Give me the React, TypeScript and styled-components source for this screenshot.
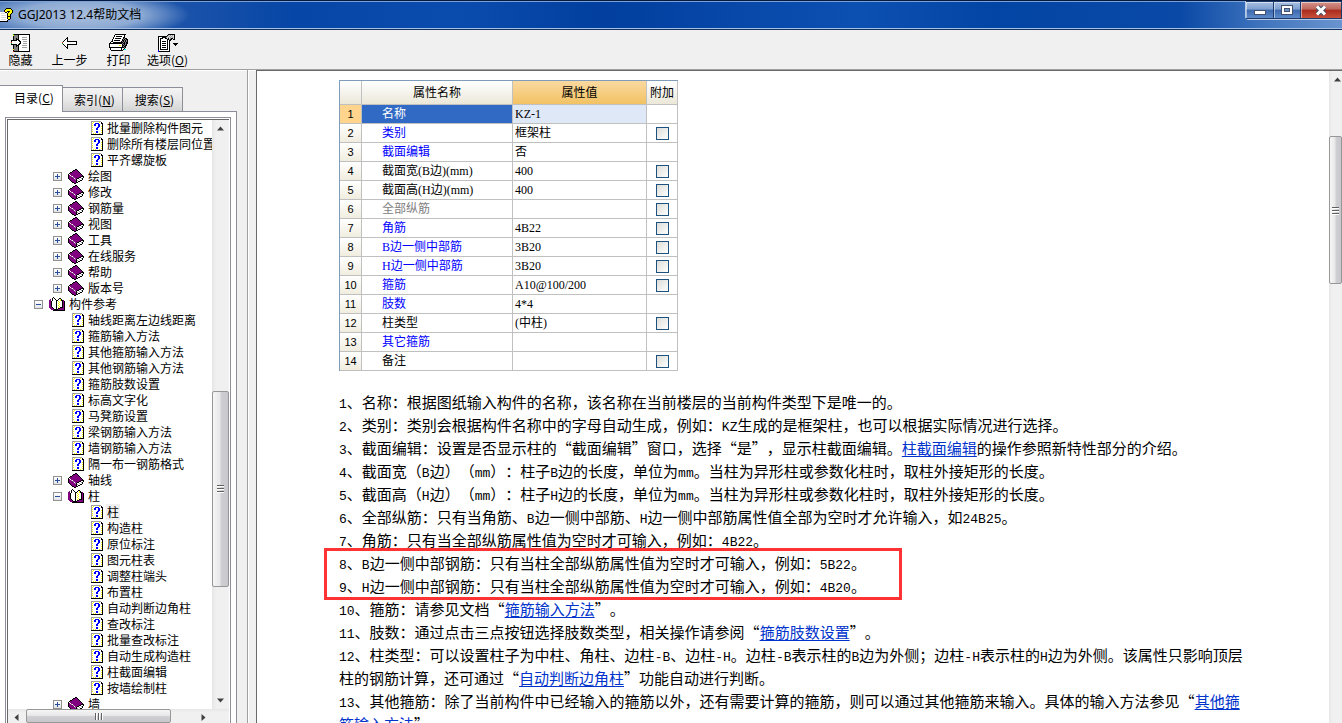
import React from "react";
import styled, { createGlobalStyle, css } from "styled-components";

const cjk = `"Noto Sans CJK SC", sans-serif`;

const GlobalStyle = createGlobalStyle`
  *, *::before, *::after { box-sizing: border-box; }
  body { margin: 0; font-family: ${cjk}; font-size: 12px; color: #000; text-spacing-trim: space-all; }
  button { font: inherit; color: inherit; padding: 0; border: 0; background: none; }
`;

/* ---------- pixel icons ---------- */

const palette: Record<string, string> = {
  K: "#000000",
  W: "#ffffff",
  P: "#800080",
  Y: "#ffff00",
  B: "#0000ff",
  G: "#a0a0a0",
  D: "#808080",
  L: "#d8d8d8",
  C: "#00ffff",
  R: "#e02020",
  N: "#00a000",
};

const PixelIcon = ({ rows }: { rows: string[] }) => {
  const width = Math.max(...rows.map((r) => r.length));
  const runs: React.ReactNode[] = [];
  rows.forEach((row, y) => {
    let x = 0;
    while (x < row.length) {
      const c = row[x];
      let end = x;
      while (row[end] === c) end++;
      if (palette[c]) {
        runs.push(<rect key={`${x}-${y}`} x={x} y={y} width={end - x} height={1} fill={palette[c]} />);
      }
      x = end;
    }
  });
  return (
    <svg width={width} height={rows.length} viewBox={`0 0 ${width} ${rows.length}`} shapeRendering="crispEdges" aria-hidden="true">
      {runs}
    </svg>
  );
};

const closedBook = [
  ".......KK.......",
  ".....KKPPK......",
  "....KPPPPPK.....",
  "..KKPPPPPPPK....",
  ".KPPPPPPPPPPK...",
  "KWPPPPPPPPPPPK..",
  "KPWPPPPPPPPPPPK.",
  "KPPGWPPPPPPPPKKK",
  "KPPPPGPPPPPKKWWK",
  "KPPPPPWPPKKWWGK.",
  ".KPPPPPGKWWGWWK.",
  "..KPPPPPKGWWKK..",
  "...KPPPPKWKK....",
  "....KKPPKK......",
  "......KK........",
];

const openBook = [
  "....K...........",
  "...KWK....KK....",
  ".P.KWWK..KWYK...",
  "PP.KWWWKKWWYKKP.",
  "PPKWWWWKWYWWWKPK",
  "PPKWWWWKWWYWWKPK",
  "PPKWWWWKWYWWWKPK",
  "PPKWWWWKWWYWWKPK",
  "PPKWWWWKWYWWWKPK",
  "PPKWWWWKWWYWWKPK",
  "PPPKWWWKWYWKKKPK",
  ".PPPKWWKWKKPPPPK",
  "..PPPKKKKPPPPPPK",
  "....KKKKKKKKKKKK",
];

const helpPage = [
  "GGGGGGGGGG..",
  "GWYWWWWWYWK.",
  "GYWWBBBBWWKK",
  "GWWBBWWBBWWK",
  "GYWBBWWBBWWK",
  "GWWWWWWBBWYK",
  "GYWWWWBBWWWK",
  "GWWWWBBWWWYK",
  "GYWWWBBWWWWK",
  "GWWWWWWWWWYK",
  "GYWWWBBWWWWK",
  "GWWWWBBWWWYK",
  "GWYWYWWWYWWK",
  "KKKKKKKKKKKK",
];

const hidePane = [
  "..NKKKKKKKKKKKKKKKK",
  "..YDDDDKWWWWWWWWWWK",
  "..KDDDDKWWWWWWWWWWK",
  "..KDDDDKWWWGGGGGWWK",
  "..KDDKDKWWWWWWWWWWK",
  "..KDDKKKWWWGGGGGWWK",
  "KKKKKKWKKWWWWWWWWWK",
  "KWWWWWWWKKWWGGGGWWK",
  "RWWWWWWWWKWWWWWWWWK",
  "NWWWWWWWKKWWGGGGWWK",
  "KKKKKKWKKWWWWWWWWWK",
  "..KDDKKKWWWGGGGGWWK",
  "..KDDKDKWWWWWWWWWWK",
  "..KDDDDKWWWGGGGGWWK",
  "..KDDDDKWWWWWWWWWWK",
  "..YDDDDKWWWWWWWWWWK",
  "..KDDDDKWWWWWWWWWWK",
  "..RKKKKKKKKKKKKKKKK",
];

const backArrow = [
  ".....K..........",
  "....KK..........",
  "...KWK..........",
  "..KWWK..........",
  ".KWWWKKKKKKKKKK.",
  "RWWWWWWWWWWWWWK.",
  "NWWWWWWWWWWWWWK.",
  ".KWWWKKKKKKKKKK.",
  "..KWWK..........",
  "...KWK..........",
  "....KK..........",
  ".....K..........",
];

const printer = [
  "......KKKKKKKKKKK...",
  ".....KWWWWWWWWWK....",
  ".....KWKKKKKKWWK....",
  "....KWWWWWWWWWKK....",
  "....KWKKKKKKWWKDKK..",
  "...KWWWWWWWWWKDKDKK.",
  "...KWKKKKKKWWKKDKDK.",
  "..KKWWWWWWWWKDKDKDK.",
  ".KWWKKKKKKKKKKDKDKK.",
  "KKKKKKKKKKKKKDKKDKK.",
  "KWWWWWWWWWWWWKDKDK..",
  "KWWWWWWWWWYYWKKDKK..",
  "KWWWWWWWWWWWWKDKK...",
  "KKKKKKKKKKKKKKKDK...",
  ".KWWWWWWWWWWKWWK....",
  ".KWWWWWWWWWWKWKCC...",
  "..KKKKKKKKKKKK......",
];

const options = [
  "..........KKKKKKK...",
  ".........KGLGLGLK...",
  "KKKKKKKKKGLGLGLLK...",
  "KWWWKKKKGLGLGLGLK...",
  "KWKKKWWKKLKLGKKLK...",
  "KWKWWWWWWKKGKK.KK...",
  "KWKWWWWWWKWKK.......",
  "KWKWKKKKWKWK........",
  "KWKWWWWWWKWK........",
  "KWKWKKKKWKWK...KKKKK",
  "KWKWWWWWWKWK....KKK.",
  "KWKWKKKKWKWK.....K..",
  "KWKWWWWWWKWK........",
  "KWKWKKKKWKWK........",
  "KWKWWWWWWKWK........",
  "KWKKKKKKKKWK........",
  "BWWWWWWWWWWK........",
  "BKKKKKKKKKKK........",
];

const appMark = [
  "......KKKKK..",
  ".....KYYYYYK.",
  "....KYYYYYYYK",
  "....KYYKKKYYK",
  "WWWWWKKWKYYYK",
  "WLLLLWWKYYYK.",
  "WWWWWWWKYYK..",
  "WLLLLLWKYYK..",
  "WWWWWWWKKKK..",
  "WLLLLLWKYYK..",
  "WWWWWWWKYYK..",
  "WLLLLLWWKK...",
  "WWWWWWWK.....",
  "KKKKKKKK.....",
];

/* ---------- window frame ---------- */

const Frame = styled.div`
  display: flex;
  flex-direction: column;
  height: 100vh;
  overflow: hidden;
  background: #f0f0f0;
`;

const TitleBar = styled.header`
  display: flex;
  flex: none;
  align-items: flex-start;
  height: 30px;
  border-top: 1px solid #06193f;
  border-bottom: 1px solid #12315f;
  box-shadow: inset 0 1px 0 #7ba2d6, inset 0 -1px 0 #a4c0e4;
  background: radial-gradient(ellipse 110px 24px at 80px 14px, #a9bedc 0, #8eabd4 55%, transparent 100%),
    linear-gradient(90deg, #3f6fb6 0, #1a52aa 14%, #0646a6 22%, #0a4cae 34%, #023f9e 45%, #0c50b2 64%, #0345a4 74%, #0a49a6 88%, #3f74bd 94%, #6a94cf 100%);
`;

const AppTitle = styled.h1`
  display: flex;
  flex: 1;
  align-items: center;
  gap: 5px;
  height: 28px;
  margin: 0;
  font: 400 12px/16px "Noto Sans", ${cjk};
`;

const Captions = styled.div`
  display: flex;
  border: 1px solid #b7cbe6;
  border-width: 0 0 1px 1px;
  border-radius: 0 0 0 4px;
`;

const Caption = styled.button<{ $width: number; $close?: boolean; $low?: boolean }>`
  display: grid;
  place-items: center;
  width: ${(p) => p.$width}px;
  height: 18px;
  padding-top: ${(p) => (p.$low ? 5 : 0)}px;
  border: 1px solid #1d3a6c;
  border-left-width: 0;
  box-shadow: inset 1px 1px 0 rgba(255, 255, 255, 0.5);
  background: ${(p) =>
    p.$close
      ? "linear-gradient(#d5948c 0, #c0675c 45%, #a92b1c 50%, #c8503a 100%)"
      : "linear-gradient(#a9c0e2 0, #7d9fd0 45%, #3c69ae 50%, #5c8acb 100%)"};
`;

const ToolBar = styled.div`
  display: flex;
  flex: none;
  height: 40px;
  margin-left: -4px;
  border-bottom: 1px solid #a0a0a0;
`;

const Tool = styled.button`
  display: flex;
  flex-direction: column;
  align-items: center;
  justify-content: space-between;
  width: 49px;
  padding: 3px 0 1px;
  white-space: nowrap;
  line-height: 16px;
`;

const ToolArt = styled.span`
  display: grid;
  place-items: center;
  height: 20px;
`;

const Body = styled.div`
  display: grid;
  flex: 1;
  grid-template-columns: 247px 10px minmax(0, 1fr);
  min-height: 0;
`;

/* ---------- sidebar ---------- */

const Sidebar = styled.aside`
  display: flex;
  flex-direction: column;
  min-height: 0;
  padding: 14px 10px 0 0;
  border-top: 1px solid #fff;
`;

const TabList = styled.div`
  display: flex;
  flex: none;
  align-items: flex-end;
  height: 26px;
`;

const Tab = styled.button<{ $active?: boolean }>`
  height: 24px;
  border: 1px solid #8c8e99;
  border-left: 0;
  border-bottom: 0;
  line-height: 22px;
  text-align: center;
  background: linear-gradient(#f4f4f4, #e8e8e8 50%, #d4d4d4);
  ${(p) =>
    p.$active
      ? css`
          position: relative;
          width: 63px;
          height: 27px;
          margin-bottom: -1px;
          padding: 0 0 3px 6px;
          background: #fff;
        `
      : css`
          width: 60px;
          padding-left: 4px;
        `}
`;

const TabPanel = styled.div`
  display: flex;
  flex: 1;
  min-height: 0;
  padding: 5px 5px 0;
  border: 1px solid #8c8e99;
  border-width: 1px 1px 0 0;
  background: #fff;
`;

const TreeFrame = styled.div`
  display: flex;
  flex: 1;
  min-width: 0;
  padding: 1px 1px 0;
  border: 1px solid #8c8e99;
  border-bottom: 0;
`;

const TreeBox = styled.div`
  display: grid;
  flex: 1;
  grid-template: minmax(0, 1fr) 14px / minmax(0, 1fr) 17px;
  min-width: 0;
  border: 1px solid #696969;
  border-width: 1px 0 0 1px;
`;

const Tree = styled.ul`
  margin: 0;
  padding: 0;
  overflow: hidden;
  list-style: none;
`;

const TreeItem = styled.li<{ $depth: number }>`
  display: flex;
  align-items: center;
  height: 16px;
  padding-left: ${(p) => 7 + 19 * p.$depth}px;
  white-space: nowrap;
`;

const Toggle = styled.span`
  display: flex;
  flex: none;
  width: 15px;
`;

const Expander = styled.button`
  width: 9px;
  height: 9px;
  border: 1px solid #919191;
  background: linear-gradient(#fff, #e4e4e4);
  svg { display: block; }
`;

const NodeIcon = styled.span<{ $leaf: boolean }>`
  display: flex;
  flex: none;
  width: 19px;
  padding-left: ${(p) => (p.$leaf ? 4 : 0)}px;
`;

const NodeLabel = styled.a<{ $selected?: boolean }>`
  padding: 0 1px;
  color: #000;
  line-height: 16px;
  text-decoration: none;
  background: ${(p) => (p.$selected ? "#f0f0f0" : "transparent")};
`;

/* ---------- scroll bars ---------- */

const VerticalBar = styled.div`
  display: flex;
  flex-direction: column;
  overflow: hidden;
  background: linear-gradient(90deg, #e6e6e6, #f0f0f0 25%);
`;

const HorizontalBar = styled.div`
  display: flex;
  grid-column: 1 / -1;
  overflow: hidden;
  background: linear-gradient(#e6e6e6, #f0f0f0 25%);
`;

const Arrow = styled.button`
  display: grid;
  flex: none;
  place-items: center;
  width: 17px;
  height: 17px;
`;

const Track = styled.div<{ $grow: number }>`
  flex: ${(p) => p.$grow} 1 0;
`;

const Thumb = styled.div<{ $grow: number; $across?: boolean }>`
  display: grid;
  flex: ${(p) => p.$grow} 1 0;
  place-items: center;
  border: 1px solid #979797;
  border-radius: 2px;
  background: linear-gradient(${(p) => (p.$across ? "180deg" : "90deg")}, #f6f6f6, #e8e8ea 45%, #cfcfd3 55%, #c8c8cc 100%);
`;

const ArrowMark = ({ turn }: { turn: number }) => (
  <svg width="7" height="7" viewBox="0 0 7 7" aria-hidden="true">
    <path d="M0 5.5 L3.5 1.5 L7 5.5 Z" fill="#404040" transform={`rotate(${turn} 3.5 3.5)`} />
  </svg>
);

const Grip = ({ across }: { across?: boolean }) => (
  <svg width="9" height="9" viewBox="0 0 9 9" shapeRendering="crispEdges" aria-hidden="true">
    <path d={across ? "M1.5 1v7M4.5 1v7M7.5 1v7" : "M1 1.5h7M1 4.5h7M1 7.5h7"} stroke="#606060" />
    <path d={across ? "M2.5 1v7M5.5 1v7M8.5 1v7" : "M1 2.5h7M1 5.5h7M1 8.5h7"} stroke="#fff" />
  </svg>
);

/* ---------- content ---------- */

const Splitter = styled.div`
  border: 1px solid #a0a0a0;
  border-width: 0 1px 0 1px;
  box-shadow: inset 1px 1px 0 #fff;
`;

const Main = styled.main`
  display: grid;
  grid-template-columns: minmax(0, 1fr) 13px;
  min-height: 0;
  margin-left: -1px;
  border-top: 1px solid #696969;
  border-left: 1px solid #696969;
  background: #fff;
`;

const Page = styled.article`
  min-height: 0;
  padding: 9px 82px 0;
  overflow: hidden;
`;

const Table = styled.table`
  width: 339px;
  margin-bottom: 19px;
  border: 1px solid #7f9db9;
  border-width: 1px 0 0 1px;
  border-spacing: 0;
  table-layout: fixed;
  font: 12px/16px "Liberation Serif", ${cjk};
`;

const Th = styled.th<{ $active?: boolean }>`
  height: 24px;
  padding: 0;
  border: 1px solid #c0c0c0;
  border-width: 0 1px 1px 0;
  font-weight: 400;
  background: ${(p) => (p.$active ? "linear-gradient(#fad9a0, #f2c263)" : "linear-gradient(#fff, #ebe8d9)")};
`;

const RowNumber = styled.th<{ $active?: boolean }>`
  height: 19px;
  padding: 0;
  border: 1px solid #c0c0c0;
  border-width: 0 1px 1px 0;
  font: 400 11px/16px "Liberation Sans", sans-serif;
  background: ${(p) => (p.$active ? "#ffd58d" : "linear-gradient(#fff, #f0eddf)")};
`;

const tones = { blue: "#0000ff", black: "#000000", gray: "#808080", white: "#ffffff" };

const Td = styled.td<{ $tone?: keyof typeof tones; $fill?: string; $indent?: number }>`
  height: 19px;
  padding: 0 0 0 ${(p) => p.$indent ?? 0}px;
  border: 1px solid #c0c0c0;
  border-width: 0 1px 1px 0;
  line-height: 16px;
  color: ${(p) => tones[p.$tone ?? "black"]};
  background: ${(p) => p.$fill ?? "#fff"};
`;

const Check = styled.input`
  display: block;
  width: 13px;
  height: 13px;
  margin: 0 auto;
  appearance: none;
  border: 1px solid #1c5180;
  background: linear-gradient(135deg, #dcdcd7, #fff);
`;

const Para = styled.p`
  margin: 0;
  font-size: 15px;
  line-height: 23px;
`;

const Latin = styled.span`
  font-family: "Liberation Mono", monospace;
  font-size: 13px;
  line-height: 1;
`;

const DocLink = styled.a`
  color: #0033cc;
  text-underline-offset: 2px;
`;

const Highlight = styled.div`
  width: fit-content;
  margin: -3px 0 -3px -15px;
  padding: 0 33px 0 12px;
  border: 3px solid #ff3333;
`;

/* ---------- data ---------- */

type Kind = "leaf" | "closed" | "open";
type TreeNode = [depth: number, kind: Kind, label: string];

const leaves = (depth: number, labels: string[]): TreeNode[] => labels.map((l) => [depth, "leaf", l]);
const books = (depth: number, labels: string[]): TreeNode[] => labels.map((l) => [depth, "closed", l]);

const nodes: TreeNode[] = [
  ...leaves(3, ["批量删除构件图元", "删除所有楼层同位置", "平齐螺旋板"]),
  ...books(2, ["绘图", "修改", "钢筋量", "视图", "工具", "在线服务", "帮助", "版本号"]),
  [1, "open", "构件参考"],
  ...leaves(2, [
    "轴线距离左边线距离",
    "箍筋输入方法",
    "其他箍筋输入方法",
    "其他钢筋输入方法",
    "箍筋肢数设置",
    "标高文字化",
    "马凳筋设置",
    "梁钢筋输入方法",
    "墙钢筋输入方法",
    "隔一布一钢筋格式",
  ]),
  [2, "closed", "轴线"],
  [2, "open", "柱"],
  ...leaves(3, [
    "柱",
    "构造柱",
    "原位标注",
    "图元柱表",
    "调整柱端头",
    "布置柱",
    "自动判断边角柱",
    "查改标注",
    "批量查改标注",
    "自动生成构造柱",
    "柱截面编辑",
    "按墙绘制柱",
  ]),
  [2, "closed", "墙"],
];

const nodeArt: Record<Kind, string[]> = { leaf: helpPage, closed: closedBook, open: openBook };

type Property = { name: string; value: string; tone: keyof typeof tones; check?: boolean };

const properties: Property[] = [
  { name: "名称", value: "KZ-1", tone: "white" },
  { name: "类别", value: "框架柱", tone: "blue", check: true },
  { name: "截面编辑", value: "否", tone: "blue" },
  { name: "截面宽(B边)(mm)", value: "400", tone: "black", check: true },
  { name: "截面高(H边)(mm)", value: "400", tone: "black", check: true },
  { name: "全部纵筋", value: "", tone: "gray", check: true },
  { name: "角筋", value: "4B22", tone: "blue", check: true },
  { name: "B边一侧中部筋", value: "3B20", tone: "blue", check: true },
  { name: "H边一侧中部筋", value: "3B20", tone: "blue", check: true },
  { name: "箍筋", value: "A10@100/200", tone: "blue", check: true },
  { name: "肢数", value: "4*4", tone: "blue" },
  { name: "柱类型", value: "(中柱)", tone: "black", check: true },
  { name: "其它箍筋", value: "", tone: "blue" },
  { name: "备注", value: "", tone: "black", check: true },
];

/* Text in which [brackets] mark a link and Latin runs take the monospaced face. */
const Rich = ({ text }: { text: string }) => (
  <>
    {text.split(/(\[[^\]]+\]|[A-Za-z0-9-]+)/).map((part, i) => {
      if (part.startsWith("[")) return <DocLink key={i} href="#topic">{part.slice(1, -1)}</DocLink>;
      if (/^[A-Za-z0-9-]+$/.test(part)) return <Latin key={i}>{part}</Latin>;
      return part;
    })}
  </>
);

const before = [
  "1、名称：根据图纸输入构件的名称，该名称在当前楼层的当前构件类型下是唯一的。",
  "2、类别：类别会根据构件名称中的字母自动生成，例如：KZ生成的是框架柱，也可以根据实际情况进行选择。",
  "3、截面编辑：设置是否显示柱的“截面编辑”窗口，选择“是”，显示柱截面编辑。[柱截面编辑]的操作参照新特性部分的介绍。",
  "4、截面宽（B边）（mm）：柱子B边的长度，单位为mm。当柱为异形柱或参数化柱时，取柱外接矩形的长度。",
  "5、截面高（H边）（mm）：柱子H边的长度，单位为mm。当柱为异形柱或参数化柱时，取柱外接矩形的长度。",
  "6、全部纵筋：只有当角筋、B边一侧中部筋、H边一侧中部筋属性值全部为空时才允许输入，如24B25。",
  "7、角筋：只有当全部纵筋属性值为空时才可输入，例如：4B22。",
];

const marked = [
  "8、B边一侧中部钢筋：只有当柱全部纵筋属性值为空时才可输入，例如：5B22。",
  "9、H边一侧中部钢筋：只有当柱全部纵筋属性值为空时才可输入，例如：4B20。",
];

const after = [
  "10、箍筋：请参见文档“[箍筋输入方法]”。",
  "11、肢数：通过点击三点按钮选择肢数类型，相关操作请参阅“[箍筋肢数设置]”。",
  "12、柱类型：可以设置柱子为中柱、角柱、边柱-B、边柱-H。边柱-B表示柱的B边为外侧；边柱-H表示柱的H边为外侧。该属性只影响顶层柱的钢筋计算，还可通过“[自动判断边角柱]”功能自动进行判断。",
  "13、其他箍筋：除了当前构件中已经输入的箍筋以外，还有需要计算的箍筋，则可以通过其他箍筋来输入。具体的输入方法参见“[其他箍筋输入方法]”",
];

const paragraphs = (list: string[]) => list.map((t) => <Para key={t}><Rich text={t} /></Para>);

export default function App() {
  return (
    <Frame>
      <GlobalStyle />
      <TitleBar>
        <AppTitle>
          <PixelIcon rows={appMark} />
          GGJ2013 12.4帮助文档
        </AppTitle>
        <Captions>
          <Caption $width={28} $low aria-label="最小化">
            <svg width="12" height="5" aria-hidden="true"><rect x="0.5" y="0.5" width="11" height="4" fill="#fff" stroke="#46506a" /></svg>
          </Caption>
          <Caption $width={27} aria-label="最大化">
            <svg width="12" height="10" aria-hidden="true">
              <rect x="0.5" y="0.5" width="11" height="9" fill="#fff" stroke="#46506a" />
              <rect x="3.5" y="3.5" width="5" height="3" fill="#6f94cc" stroke="#46506a" />
            </svg>
          </Caption>
          <Caption $width={41} $close aria-label="关闭">
            <svg width="12" height="11" viewBox="0 0 12 11" aria-hidden="true">
              <path d="M2.5 2 L9.5 9 M9.5 2 L2.5 9" stroke="#46506a" strokeWidth="5" />
              <path d="M2 1.5 L10 9.5 M10 1.5 L2 9.5" stroke="#fff" strokeWidth="3" />
            </svg>
          </Caption>
        </Captions>
      </TitleBar>

      <ToolBar role="toolbar">
        <Tool><ToolArt><PixelIcon rows={hidePane} /></ToolArt>隐藏</Tool>
        <Tool><ToolArt><PixelIcon rows={backArrow} /></ToolArt>上一步</Tool>
        <Tool><ToolArt><PixelIcon rows={printer} /></ToolArt>打印</Tool>
        <Tool><ToolArt><PixelIcon rows={options} /></ToolArt><span>选项(<u>O</u>)</span></Tool>
      </ToolBar>

      <Body>
        <Sidebar>
          <TabList role="tablist">
            <Tab role="tab" aria-selected="true" $active>目录(<u>C</u>)</Tab>
            <Tab role="tab" aria-selected="false">索引(<u>N</u>)</Tab>
            <Tab role="tab" aria-selected="false">搜索(<u>S</u>)</Tab>
          </TabList>
          <TabPanel role="tabpanel">
            <TreeFrame>
              <TreeBox>
                <Tree>
                  {nodes.map(([depth, kind, label], i) => (
                    <TreeItem key={i} $depth={depth}>
                      <Toggle>
                        {kind !== "leaf" && (
                          <Expander aria-label={kind === "open" ? "折叠" : "展开"}>
                            <svg width="7" height="7" shapeRendering="crispEdges" aria-hidden="true">
                              <path d={kind === "open" ? "M1 3.5h5" : "M1 3.5h5M3.5 1v5"} stroke="#2b4fa0" />
                            </svg>
                          </Expander>
                        )}
                      </Toggle>
                      <NodeIcon $leaf={kind === "leaf"}><PixelIcon rows={nodeArt[kind]} /></NodeIcon>
                      <NodeLabel href="#topic" $selected={kind === "leaf" && label === "柱"}>{label}</NodeLabel>
                    </TreeItem>
                  ))}
                </Tree>
                <VerticalBar>
                  <Arrow aria-label="向上滚动"><ArrowMark turn={0} /></Arrow>
                  <Track $grow={254} />
                  <Thumb $grow={195}><Grip /></Thumb>
                  <Track $grow={105} />
                  <Arrow aria-label="向下滚动"><ArrowMark turn={180} /></Arrow>
                </VerticalBar>
                <HorizontalBar>
                  <Arrow aria-label="向左滚动"><ArrowMark turn={270} /></Arrow>
                  <Track $grow={1} />
                  <Thumb $grow={145} $across><Grip across /></Thumb>
                  <Track $grow={24} />
                  <Arrow aria-label="向右滚动"><ArrowMark turn={90} /></Arrow>
                  <Arrow as="span" />
                </HorizontalBar>
              </TreeBox>
            </TreeFrame>
          </TabPanel>
        </Sidebar>

        <Splitter />

        <Main>
          <Page>
            <Table>
              <colgroup>
                <col width={22} />
                <col width={151} />
                <col width={134} />
                <col width={31} />
              </colgroup>
              <thead>
                <tr>
                  <Th />
                  <Th>属性名称</Th>
                  <Th $active>属性值</Th>
                  <Th>附加</Th>
                </tr>
              </thead>
              <tbody>
                {properties.map((p, i) => (
                  <tr key={p.name}>
                    <RowNumber scope="row" $active={i === 0}>{i + 1}</RowNumber>
                    <Td $tone={p.tone} $indent={20} $fill={i === 0 ? "#316ac5" : undefined}>{p.name}</Td>
                    <Td $indent={2} $fill={i === 0 ? "#dfe8f6" : undefined}>{p.value}</Td>
                    <Td>{p.check && <Check type="checkbox" aria-label={`附加 ${p.name}`} />}</Td>
                  </tr>
                ))}
              </tbody>
            </Table>
            {paragraphs(before)}
            <Highlight>{paragraphs(marked)}</Highlight>
            {paragraphs(after)}
          </Page>
          <VerticalBar>
            <Arrow aria-label="向上滚动"><ArrowMark turn={0} /></Arrow>
            <Track $grow={48} />
            <Thumb $grow={147}><Grip /></Thumb>
            <Track $grow={440} />
          </VerticalBar>
        </Main>
      </Body>
    </Frame>
  );
}
